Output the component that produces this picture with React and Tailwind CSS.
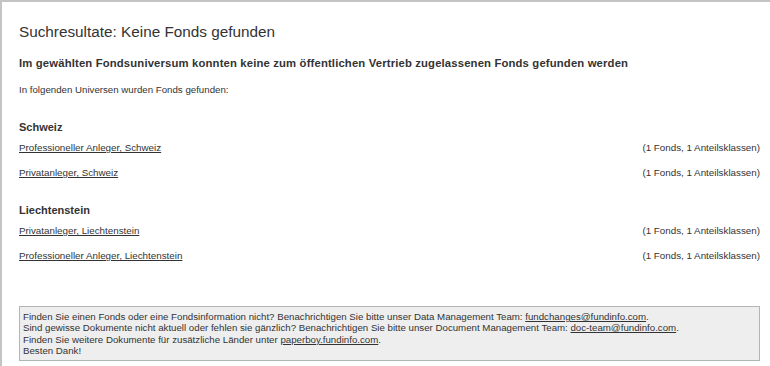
import React from "react";

const groups = [
	{
		name: "Schweiz",
		items: ["Professioneller Anleger, Schweiz", "Privatanleger, Schweiz"],
	},
	{
		name: "Liechtenstein",
		items: ["Privatanleger, Liechtenstein", "Professioneller Anleger, Liechtenstein"],
	},
];

const App = () => {
	return (
		<main
			className="w-[770px] h-[366px] bg-white border-t-2 border-l-2 border-[#c4c4c4] text-[#333] overflow-hidden"
			style={{ fontFamily: '"Liberation Sans", Arial, sans-serif' }}
		>
			<div className="pl-[17px] pr-[10px] pt-[20px]">
				<h1 className="text-[15.3px] leading-[20px]">Suchresultate: Keine Fonds gefunden</h1>
				<h2 className="mt-[13px] text-[11.3px] leading-[16px] font-bold tracking-[0.15px]">
					Im gewählten Fondsuniversum konnten keine zum öffentlichen Vertrieb zugelassenen Fonds gefunden werden
				</h2>
				<p className="mt-[13px] text-[9.7px] leading-[12px]">In folgenden Universen wurden Fonds gefunden:</p>
				{groups.map((group, key) => (
					<section key={key} className="mt-[24px] first:mt-[24px]">
						<h3 className="text-[11px] leading-[14px] font-bold">{group.name}</h3>
						<ul className="mt-[8px] flex flex-col gap-[13px]">
							{group.items.map((item, i) => (
								<li key={i} className="flex justify-between text-[9.8px] leading-[12px]">
									<a href="#" className="underline">
										{item}
									</a>
									<span>(1 Fonds, 1 Anteilsklassen)</span>
								</li>
							))}
						</ul>
					</section>
				))}
				<div className="mt-[44px] bg-[#eeeeee] border border-[#b4b4b4] px-[3px] pt-[4px] pb-[3px] text-[9.7px] leading-[11.4px]">
					<p>
						Finden Sie einen Fonds oder eine Fondsinformation nicht? Benachrichtigen Sie bitte unser Data Management
						Team: <a href="#" className="underline">fundchanges@fundinfo.com</a>.
					</p>
					<p>
						Sind gewisse Dokumente nicht aktuell oder fehlen sie gänzlich? Benachrichtigen Sie bitte unser Document
						Management Team: <a href="#" className="underline">doc-team@fundinfo.com</a>.
					</p>
					<p>
						Finden Sie weitere Dokumente für zusätzliche Länder unter{" "}
						<a href="#" className="underline">paperboy.fundinfo.com</a>.
					</p>
					<p>Besten Dank!</p>
				</div>
			</div>
		</main>
	);
};

export default App;
